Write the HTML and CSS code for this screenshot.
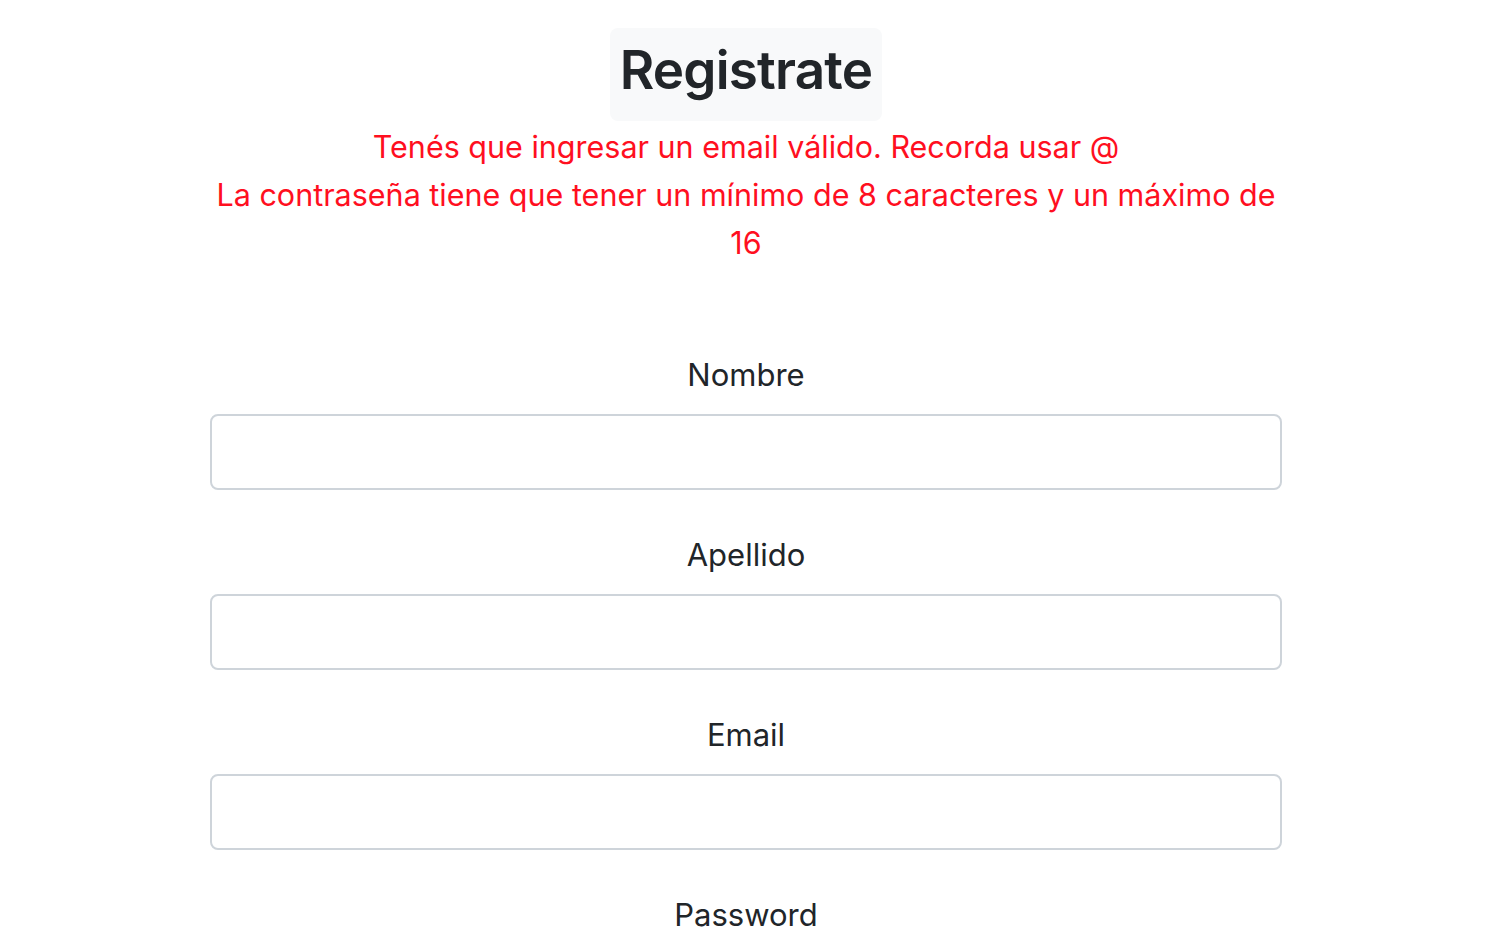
FILE: index.html
```html
<!DOCTYPE html>
<html lang="es">
<head>
<meta charset="utf-8">
<title>Registrate</title>
<link rel="stylesheet" href="styles.css">
</head>
<body>
<main class="page">
  <div class="header">
    <h1 class="title">Registrate</h1>
  </div>
  <div class="errors">
    <p class="error">Tenés que ingresar un email válido. Recorda usar @</p>
    <p class="error">La contraseña tiene que tener un mínimo de 8 caracteres y un máximo de 16</p>
  </div>
  <form class="form">
    <div class="group">
      <label class="label" for="nombre">Nombre</label>
      <input class="control" id="nombre" type="text">
    </div>
    <div class="group">
      <label class="label" for="apellido">Apellido</label>
      <input class="control" id="apellido" type="text">
    </div>
    <div class="group">
      <label class="label" for="email">Email</label>
      <input class="control" id="email" type="text">
    </div>
    <div class="group">
      <label class="label" for="password">Password</label>
      <input class="control" id="password" type="password">
    </div>
  </form>
</main>
</body>
</html>
```

FILE: styles.css
```css
html, body {
  margin: 0;
  padding: 0;
  background: #ffffff;
}
body {
  font-family: Inter, "Noto Sans", "Liberation Sans", sans-serif;
  color: #212529;
  overflow: hidden;
}
.page {
  width: 1492px;
  display: flex;
  flex-direction: column;
  align-items: center;
  padding-top: 28px;
}
.header {
  display: flex;
  justify-content: center;
}
.title {
  margin: 0;
  background: #f8f9fa;
  border-radius: 8px;
  padding: 0 10px;
  height: 93px;
  line-height: 84px;
  font-size: 53px;
  font-weight: 600;
  letter-spacing: -0.8px;
  color: #212529;
}
.errors {
  width: 1072px;
  margin-top: 2px;
  text-align: center;
}
.error {
  margin: 0;
  color: #ff0f1f;
  font-size: 30.5px;
  line-height: 48px;
}
.form {
  width: 1072px;
  margin-top: 84px;
  display: flex;
  flex-direction: column;
  gap: 41px;
}
.group {
  display: flex;
  flex-direction: column;
  align-items: stretch;
}
.label {
  display: block;
  text-align: center;
  font-size: 31px;
  line-height: 48px;
  margin-bottom: 15px;
  color: #212529;
}
.control {
  box-sizing: border-box;
  height: 76px;
  width: 100%;
  border: 2px solid #ced4da;
  border-radius: 8px;
  background: #fff;
  margin: 0;
  padding: 0 24px;
  font-size: 30px;
  font-family: inherit;
}
```
